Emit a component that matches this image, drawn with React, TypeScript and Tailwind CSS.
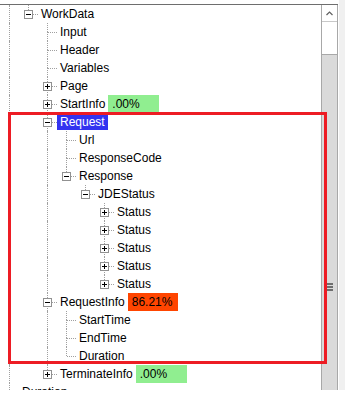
import React from "react";

type Row = {
  label: string;
  level: number;
  guides: boolean[];
  last: boolean;
  exp?: "plus" | "minus";
  badge?: { text: string; cls: string };
  selected?: boolean;
};

const G = "border-[#a0a0a0]";

const rows: Row[] = [
  { label: "WorkData", level: 1, guides: [true], last: true, exp: "minus" },
  { label: "Input", level: 2, guides: [true, false], last: false },
  { label: "Header", level: 2, guides: [true, false], last: false },
  { label: "Variables", level: 2, guides: [true, false], last: false },
  { label: "Page", level: 2, guides: [true, false], last: false, exp: "plus" },
  {
    label: "StartInfo",
    level: 2,
    guides: [true, false],
    last: false,
    exp: "plus",
    badge: { text: ".00%", cls: "bg-[#90ee90] w-[51px]" },
  },
  { label: "Request", level: 2, guides: [true, false], last: false, exp: "minus", selected: true },
  { label: "Url", level: 3, guides: [true, false, true], last: false },
  { label: "ResponseCode", level: 3, guides: [true, false, true], last: false },
  { label: "Response", level: 3, guides: [true, false, true], last: true, exp: "minus" },
  { label: "JDEStatus", level: 4, guides: [true, false, true, false], last: true, exp: "minus" },
  { label: "Status", level: 5, guides: [true, false, true, false, false], last: false, exp: "plus" },
  { label: "Status", level: 5, guides: [true, false, true, false, false], last: false, exp: "plus" },
  { label: "Status", level: 5, guides: [true, false, true, false, false], last: false, exp: "plus" },
  { label: "Status", level: 5, guides: [true, false, true, false, false], last: false, exp: "plus" },
  { label: "Status", level: 5, guides: [true, false, true, false, false], last: true, exp: "plus" },
  {
    label: "RequestInfo",
    level: 2,
    guides: [true, false],
    last: false,
    exp: "minus",
    badge: { text: "86.21%", cls: "bg-[#ff4500] w-[50px]" },
  },
  { label: "StartTime", level: 3, guides: [true, false, true], last: false },
  { label: "EndTime", level: 3, guides: [true, false, true], last: false },
  { label: "Duration", level: 3, guides: [true, false, true], last: true },
  {
    label: "TerminateInfo",
    level: 2,
    guides: [true, false],
    last: true,
    exp: "plus",
    badge: { text: ".00%", cls: "bg-[#90ee90] w-[51px]" },
  },
  { label: "Duration", level: 0, guides: [], last: true },
];

function Expander({ kind }: { kind: "plus" | "minus" }) {
  return (
    <div className="absolute left-[5px] top-[5px] w-[9px] h-[9px] border border-[#919191] bg-white">
      <div className="absolute left-[1px] top-[3px] w-[5px] h-px bg-black" />
      {kind === "plus" && <div className="absolute left-[3px] top-[1px] w-px h-[5px] bg-black" />}
    </div>
  );
}

function TreeRow({ row }: { row: Row }) {
  return (
    <div className="flex h-[18px] shrink-0 items-stretch">
      {row.guides.map((g, i) => (
        <div key={i} className="relative w-[19px] shrink-0">
          {g && <div className={`absolute left-[9px] top-0 bottom-0 w-0 border-l border-dotted ${G}`} />}
        </div>
      ))}
      <div className="relative w-[19px] shrink-0">
        <div className={`absolute left-[9px] top-0 h-[9px] w-0 border-l border-dotted ${G}`} />
        {!row.last && <div className={`absolute left-[9px] top-[9px] bottom-0 w-0 border-l border-dotted ${G}`} />}
        <div className={`absolute left-[10px] right-0 top-[9px] h-0 border-t border-dotted ${G}`} />
        {row.exp && <Expander kind={row.exp} />}
      </div>
      <div className="flex items-center">
        <span
          className={`h-[16px] flex items-center pl-[3px] pr-[3px] whitespace-nowrap ${
            row.selected ? "bg-[#3333f0] text-white" : "text-black"
          }`}
        >
          {row.label}
        </span>
        {row.badge && (
          <span className={`h-[18px] flex items-center pl-[4px] text-black whitespace-nowrap ${row.badge.cls}`}>
            {row.badge.text}
          </span>
        )}
      </div>
    </div>
  );
}

export default function App() {
  return (
    <div className="relative w-[348px] h-[399px] overflow-hidden bg-white flex items-start font-['Liberation_Sans',Arial,sans-serif] text-[12px] leading-[18px]">
      <div className="w-[338px] h-[386px] shrink-0 mt-[4px] border-t border-[#6e6e6e] flex overflow-hidden">
        <div className="w-[321px] shrink-0 overflow-hidden flex flex-col">
          {rows.map((r, i) => (
            <TreeRow key={i} row={r} />
          ))}
        </div>
        <div className="w-[17px] shrink-0 flex flex-col border-l border-r border-[#a8a8a8]">
          <div className="h-[17px] shrink-0 border-b border-[#c8c8c8] bg-white flex items-center justify-center">
            <svg width="7" height="5" viewBox="0 0 7 5">
              <path d="M0.5 4 L3.5 1 L6.5 4" fill="none" stroke="#606060" strokeWidth="1.2" />
            </svg>
          </div>
          <div className="h-[32px] shrink-0 bg-white" />
          <div className="flex-1 bg-[#dadada] border-t border-[#a8a8a8] flex flex-col items-center">
            <div className="mt-[228px] flex flex-col gap-[1px] w-[6px] ml-[1px]">
              <div className="h-[2px] bg-[#6e6e6e]" />
              <div className="h-[2px] bg-[#6e6e6e]" />
              <div className="h-[2px] bg-[#6e6e6e]" />
            </div>
          </div>
        </div>
      </div>
      <div className="w-px h-[390px] shrink-0 bg-white" />
      <div className="w-[6px] h-[390px] shrink-0 bg-[#f0f0f0]" />
      <div className="flex-1 h-[390px] bg-white" />
      <div className="absolute left-[8px] top-[112px] w-[319px] h-[252px] border-[3px] border-[#ed1c24]" />
    </div>
  );
}
